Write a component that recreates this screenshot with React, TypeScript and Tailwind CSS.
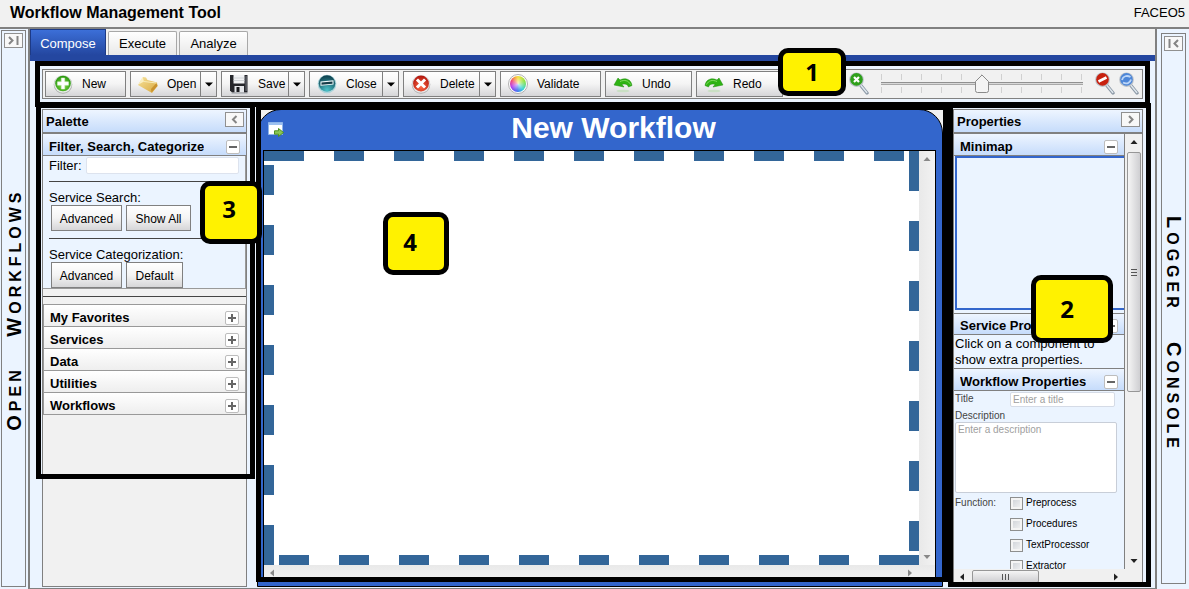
import React, { type ReactNode } from "react";

/* ---------- icons ---------- */

function NewIcon() {
  return (
    <svg width="20" height="20" viewBox="0 0 20 20" aria-hidden="true">
      <defs>
        <radialGradient id="newG" cx="50%" cy="60%" r="55%">
          <stop offset="0" stopColor="#8be04a" />
          <stop offset="1" stopColor="#2c9a12" />
        </radialGradient>
      </defs>
      <circle cx="10" cy="10.5" r="9.3" fill="#a9ada9" />
      <circle cx="10" cy="10" r="8.8" fill="#e6eae6" />
      <circle cx="10" cy="9.5" r="7.8" fill="url(#newG)" />
      <path d="M8.300 4h3.400v3.800h3.800v3.400h-3.800V15H8.300v-3.800H4.500V7.800h3.800z" fill="#fff" stroke="#d9efcf" strokeWidth=".5" />
    </svg>
  );
}

function FolderIcon() {
  return (
    <svg width="20" height="20" viewBox="0 0 20 20" aria-hidden="true">
      <defs>
        <linearGradient id="folG" x1="0" y1="0" x2="1" y2="1">
          <stop offset="0" stopColor="#f6e29c" />
          <stop offset="1" stopColor="#d9a83c" />
        </linearGradient>
      </defs>
      <path d="M0 11L5 3l3 .5L9.500 6 19 8.500l.5 3.500L14 19z" fill="url(#folG)" />
      <path d="M13.500 18.500l6-6.500-1-3-5.500 6z" fill="#c9922f" />
      <path d="M4.500 3L6 7.500.5 10.500z" fill="#faf0c4" />
      <path d="M6 7.500l12.500 1.500" stroke="#f8ebb8" strokeWidth="1" />
    </svg>
  );
}

function DiskIcon() {
  return (
    <svg width="20" height="20" viewBox="0 0 20 20" aria-hidden="true">
      <path d="M1 1h17.500v17.500H3L1 16.500z" fill="#26272c" />
      <path d="M4.500 1h11v8.500h-11z" fill="#f1f2f4" />
      <path d="M4.500 4h11M4.500 6.500h11" stroke="#c8cbd0" strokeWidth=".8" />
      <path d="M5.500 12h9.500v6.500H5.500z" fill="#e4e6ea" />
      <path d="M7.500 13h3v5h-3z" fill="#17181c" />
      <path d="M16.500 2h1.200v15h-1.200z" fill="#6c7078" />
      <path d="M2.500 19.300h16" stroke="#b0b3b8" strokeWidth="1" />
    </svg>
  );
}

function CloseIcon() {
  return (
    <svg width="20" height="20" viewBox="0 0 20 20" aria-hidden="true">
      <defs>
        <radialGradient id="cloG" cx="50%" cy="90%" r="85%">
          <stop offset="0" stopColor="#4cc3ca" />
          <stop offset="1" stopColor="#0f4350" />
        </radialGradient>
      </defs>
      <circle cx="10" cy="10" r="9.300" fill="#a9d3da" />
      <circle cx="10" cy="9.500" r="8.300" fill="url(#cloG)" />
      <path d="M3.500 7.500l13-1.200v4.200l-13 1.200z" fill="#f3fbfc" />
      <path d="M4.500 8.500l11-1v2.200l-11 1z" fill="#173d48" />
    </svg>
  );
}

function DeleteIcon() {
  return (
    <svg width="20" height="20" viewBox="0 0 20 20" aria-hidden="true">
      <defs>
        <radialGradient id="delG" cx="50%" cy="70%" r="65%">
          <stop offset="0" stopColor="#ff6b45" />
          <stop offset="1" stopColor="#b51a10" />
        </radialGradient>
      </defs>
      <circle cx="10" cy="10.500" r="9.300" fill="#adadaf" />
      <circle cx="10" cy="10" r="8.800" fill="#e9e6e6" />
      <circle cx="10" cy="9.500" r="7.900" fill="url(#delG)" />
      <path d="M7 6.500l6 6M13 6.500l-6 6" stroke="#fff" strokeWidth="3" strokeLinecap="square" />
    </svg>
  );
}

function ValidateIcon() {
  return (
    <span className="block size-5 rounded-full border border-[#b0b0b0] bg-white p-px" aria-hidden="true">
      <span className="block size-4 rounded-full bg-[radial-gradient(circle,#ffffffbb_0,#ffffff00_65%),conic-gradient(#f6e13a,#8ee23f_18%,#35d3d6_38%,#3f6cf0_52%,#b03ff0_68%,#f0447c_82%,#f6a03a_92%,#f6e13a)]" />
    </span>
  );
}

function TurnIcon({ flip = false }: { flip?: boolean }) {
  return (
    <svg width="20" height="20" viewBox="0 0 20 20" aria-hidden="true" className={flip ? "-scale-x-100" : ""}>
      <ellipse cx="10" cy="17" rx="6.500" ry="1.300" fill="#c9dfc4" />
      <path d="M1 11L5 4l2 2c5-2.500 11-1 12 5.500l-3.500 1.500c-1-3-4-3.500-6.500-2.500l2 2.500z" fill="#2fb314" stroke="#218a10" strokeWidth=".5" />
      <path d="M7 7.500c4.500-2 8.500-1 10.500 3" stroke="#84dc61" strokeWidth="1" fill="none" />
    </svg>
  );
}

function Lens({ kind }: { kind: "in" | "out" | "reset" }) {
  const rim = kind === "in" ? "#2fa01a" : kind === "out" ? "#c8210f" : "#4d86d8";
  return (
    <svg width="20" height="24" viewBox="0 0 20 24" aria-hidden="true">
      <path d="M11.500 13l6.500 8" stroke="#8b98a5" strokeWidth="3.400" strokeLinecap="round" />
      <path d="M11.800 13.200l6 7.300" stroke="#dfe7ee" strokeWidth="1.400" strokeLinecap="round" />
      <circle cx="7.500" cy="7.700" r="7.300" fill="#b9c0c8" />
      <circle cx="7.500" cy="7.400" r="6.300" fill={rim} />
      {kind === "in" && <path d="M5 5l5 5M10 5l-5 5" stroke="#fff" strokeWidth="2.200" />}
      {kind === "out" && <path d="M3.500 9.500l8-4" stroke="#fff" strokeWidth="2.600" />}
      {kind === "reset" && (
        <path d="M3 8c1-4 5-5 8.500-3M12 7.500c-.8 3.500-4.500 5-8 3" stroke="#bcd6f8" strokeWidth="1.800" fill="none" />
      )}
    </svg>
  );
}

function WindowIcon() {
  return (
    <svg width="17" height="16" viewBox="0 0 17 16" aria-hidden="true">
      <path d="M.5.500h14v12H.5z" fill="#fff" stroke="#8db4ea" />
      <path d="M1 1h13v2H1z" fill="#9cc0f0" />
      <path d="M6.500 8.800h4V6.500l5 4-5 4v-2.300h-4z" fill="#8bc653" stroke="#4d8f1f" />
    </svg>
  );
}

function Arrow({ d, color = "#222" }: { d: string; color?: string }) {
  return (
    <svg width="8" height="8" viewBox="0 0 8 8" aria-hidden="true">
      <path d={d} fill={color} />
    </svg>
  );
}
const UP = "M0.500 6L4 2l3.500 4z";
const DOWN = "M0.500 2L4 6l3.500-4z";
const LEFT = "M6 .5L2 4l4 3.500z";
const RIGHT = "M2 .5L6 4 2 7.500z";

/* ---------- small parts ---------- */

function SquareButton({ label, path }: { label: string; path: string }) {
  return (
    <button
      type="button"
      aria-label={label}
      className="flex h-[15px] w-[19px] shrink-0 items-center justify-center border border-[#909090] bg-[#f8f8f8]"
    >
      <svg width="13" height="11" viewBox="0 0 13 11" fill="none" stroke="#858585" strokeWidth="2" aria-hidden="true">
        <path d={path} />
      </svg>
    </button>
  );
}

function Fold({ open, label }: { open: boolean; label: string }) {
  return (
    <button
      type="button"
      aria-label={label}
      className="flex size-[14px] shrink-0 items-center justify-center rounded-xs border border-[#bdbdbd] bg-white"
    >
      <svg width="8" height="8" viewBox="0 0 8 8" stroke="#666" strokeWidth="2" aria-hidden="true">
        <path d={open ? "M0 4h8" : "M0 4h8M4 0v8"} />
      </svg>
    </button>
  );
}

function Frame({ className }: { className: string }) {
  return <div aria-hidden="true" className={`pointer-events-none absolute z-10 border-5 border-black ${className}`} />;
}

function Marker({ n, className }: { n: number; className: string }) {
  return (
    <div
      className={`pointer-events-none absolute z-20 flex items-center justify-center rounded-[10px] border-5 border-black bg-[#fff200] font-['Noto_Sans',sans-serif] text-2xl leading-none font-bold ${className}`}
    >
      {n}
    </div>
  );
}

const face = "bg-linear-to-b from-white via-[#f4f4f4] to-[#d6d6d8] border border-[#808080]";

function ToolButton({ icon, label, width, menu = false }: { icon: ReactNode; label: string; width: string; menu?: boolean }) {
  return (
    <div className={`flex h-[26px] shrink-0 ${face} ${width}`}>
      <button type="button" className="flex flex-1 items-center gap-[9px] pl-[7px] text-xs">
        {icon}
        {label}
      </button>
      {menu && (
        <button type="button" aria-label={`${label} options`} className="flex w-4 items-center justify-center border-l border-[#808080]">
          <svg width="8" height="5" viewBox="0 0 8 5" aria-hidden="true">
            <path d="M0 .5h8L4 4.500z" fill="#000" />
          </svg>
        </button>
      )}
    </div>
  );
}

function SideWord({ text }: { text: string }) {
  return (
    <span>
      <span className="text-xl leading-none">{text[0]}</span>
      {text.slice(1)}
    </span>
  );
}

function PanelHeader({ title, children }: { title: string; children: ReactNode }) {
  return (
    <div className="flex h-6 shrink-0 items-start justify-between border-b-2 border-[#808080] bg-linear-to-b from-[#eef5ff] to-[#c6dcfb] pt-[2px] pr-[2px] pl-[3px]">
      <h2 className="text-[13px] leading-5 font-bold">{title}</h2>
      {children}
    </div>
  );
}

function SectionHeader({ title, className = "" }: { title: string; className?: string }) {
  return (
    <div className={`flex h-[22px] shrink-0 items-center justify-between border-b border-[#808080] bg-linear-to-b from-[#eef5ff] to-[#c6dcfb] pt-1 pr-[6px] pl-[6px] ${className}`}>
      <h3 className="truncate text-[13px] font-bold">{title}</h3>
      <Fold open label={`Collapse ${title}`} />
    </div>
  );
}

function SmallButton({ children, width }: { children: ReactNode; width: string }) {
  return (
    <button type="button" className={`h-[26px] pt-px text-xs ${face} ${width}`}>
      {children}
    </button>
  );
}

/* ---------- regions ---------- */

function Toolbar() {
  const ticks = Array.from({ length: 11 }, (_, i) => 1 + i * 20);
  return (
    <div className="relative flex h-[30px] shrink-0 items-center gap-1 border border-[#808080] bg-[#f1f1f1] pr-[3px] pl-[2px]">
      <ToolButton icon={<NewIcon />} label="New" width="w-[81px]" />
      <ToolButton icon={<FolderIcon />} label="Open" width="w-[87px]" menu />
      <ToolButton icon={<DiskIcon />} label="Save" width="w-[84px]" menu />
      <ToolButton icon={<CloseIcon />} label="Close" width="w-[90px]" menu />
      <ToolButton icon={<DeleteIcon />} label="Delete" width="w-[93px]" menu />
      <ToolButton icon={<ValidateIcon />} label="Validate" width="w-[101px]" />
      <ToolButton icon={<TurnIcon />} label="Undo" width="w-[87px]" />
      <ToolButton icon={<TurnIcon flip />} label="Redo" width="w-[87px]" />
      <div className="ml-auto flex items-center">
        <button type="button" aria-label="Zoom in">
          <Lens kind="in" />
        </button>
        <div className="relative mr-3 ml-3 h-5 w-[202px]">
          <svg width="202" height="20" viewBox="0 0 202 20" aria-hidden="true">
            {ticks.map((x) => (
              <path key={x} d={`M${x - 0.5} 0v6M${x - 0.5} 13v6`} stroke="#d0d0d0" />
            ))}
            <path d="M0 8.500h202" stroke="#909090" />
            <path d="M0 9.500h202" stroke="#d8d8d8" />
            <path d="M0 10.500h202" stroke="#a8a8a8" />
            <path d="M94.500 7.500L101 1l6.500 6.500v9q0 2-2 2h-9q-2 0-2-2z" fill="#f4f4f4" stroke="#8a8a8a" />
          </svg>
          <input type="range" aria-label="Zoom level" min={0} max={10} defaultValue={5} className="absolute inset-0 w-full opacity-0" />
        </div>
        <button type="button" aria-label="Zoom out">
          <Lens kind="out" />
        </button>
        <button type="button" aria-label="Reset zoom" className="ml-1">
          <Lens kind="reset" />
        </button>
      </div>
      <Frame className="-inset-x-2 -inset-y-[9px]" />
      <Marker n={1} className="-top-[22px] left-[735px] h-12 w-[68px]" />
    </div>
  );
}

function Palette() {
  return (
    <section className="relative flex w-[205px] shrink-0 flex-col border border-[#808080] bg-[#f1f1f1]">
      <PanelHeader title="Palette">
        <SquareButton label="Collapse palette" path="M8.500 2L5 5.500 8.500 9" />
      </PanelHeader>
      <SectionHeader title="Filter, Search, Categorize" />
      <div className="border-r border-b border-[#999] bg-[#ebf4ff] pl-[6px] text-[13px]">
        <div className="flex h-[19px] items-center">
          <label htmlFor="filter">Filter:</label>
          <input id="filter" className="mr-[6px] ml-1 h-[17px] min-w-0 flex-1 rounded-xs border border-[#dde3ee] bg-white px-1 outline-none" />
        </div>
        <hr className="mt-[6px] border-[#444]" />
        <p className="pt-2 leading-[15px]">Service Search:</p>
        <div className="flex gap-1 pl-[2px]">
          <SmallButton width="w-[71px]">Advanced</SmallButton>
          <SmallButton width="w-[65px]">Show All</SmallButton>
        </div>
        <hr className="mt-[7px] border-[#444]" />
        <p className="pt-2 leading-[15px]">Service Categorization:</p>
        <div className="flex gap-1 pl-[2px]">
          <SmallButton width="w-[71px]">Advanced</SmallButton>
          <SmallButton width="w-[57px]">Default</SmallButton>
        </div>
      </div>
      <hr className="my-[7px] border-[#444]" />
      <ul className="border-x border-t border-[#999]">
        {["My Favorites", "Services", "Data", "Utilities", "Workflows"].map((name) => (
          <li key={name} className="flex h-[22px] items-center justify-between border-b border-[#999] bg-linear-to-b from-white to-[#eeeeee] pt-1 pr-[6px] pl-[6px]">
            <span className="text-[13px] font-bold">{name}</span>
            <Fold open={false} label={`Expand ${name}`} />
          </li>
        ))}
      </ul>
      <Frame className="-top-[7px] -right-[9px] -left-[7px] h-[376px]" />
      <Marker n={3} className="top-[71px] -right-4 h-[63px] w-[62px] pr-1 pb-2" />
    </section>
  );
}

function Canvas() {
  return (
    <section className="relative flex min-w-0 flex-1 flex-col bg-[#f1f1f1]">
      <div className="flex min-h-0 flex-1 flex-col rounded-t-[24px] border border-black bg-[#3366cc]">
        <div className="flex h-10 shrink-0 items-center pl-[10px]">
          <WindowIcon />
          <h1 className="flex-1 pb-1 text-center text-3xl leading-9 font-bold text-white">New Workflow</h1>
        </div>
        <div className="mr-[6px] mb-[5px] ml-[5px] flex min-h-0 flex-1 flex-col border border-black bg-white">
          <div className="flex min-h-0 flex-1">
            <div className="grid min-w-0 flex-1 grid-cols-[10px_minmax(0,1fr)_10px] grid-rows-[10px_minmax(0,1fr)_10px]">
              <div className="bg-[#336699]" />
              <div className="bg-[repeating-linear-gradient(to_right,#336699_0_30px,#ffffff_30px_60px)]" />
              <div className="bg-[#336699]" />
              <div className="bg-[repeating-linear-gradient(to_top,#336699_0_30px,#ffffff_30px_60px)]" />
              <div />
              <div className="bg-[repeating-linear-gradient(to_bottom,#336699_0_30px,#ffffff_30px_60px)]" />
              <div className="bg-[#336699]" />
              <div className="bg-[repeating-linear-gradient(to_left,#336699_0_30px,#ffffff_30px_60px)]" />
              <div className="bg-[#336699]" />
            </div>
            <div className="flex w-4 flex-col items-center justify-between bg-linear-to-r from-[#e9e9e9] to-[#f2f2f2] py-1">
              <Arrow d={UP} color="#888" />
              <Arrow d={DOWN} color="#888" />
            </div>
          </div>
          <div className="flex h-[15px] items-center justify-between bg-linear-to-b from-[#e9e9e9] to-[#f2f2f2] pr-[21px] pl-1">
            <Arrow d={LEFT} color="#888" />
            <Arrow d={RIGHT} color="#888" />
          </div>
        </div>
      </div>
      <Frame className="-top-1 -right-[5px] bottom-[5px] -left-px" />
      <Marker n={4} className="top-[103px] left-[126px] h-[63px] w-[66px] pr-3 pb-1" />
    </section>
  );
}

function Properties() {
  return (
    <section className="relative flex w-[190px] shrink-0 flex-col border border-[#808080] bg-[#ebf4ff]">
      <PanelHeader title="Properties">
        <SquareButton label="Collapse properties" path="M5 2l3.500 3.500L5 9" />
      </PanelHeader>
      <div className="flex min-h-0 flex-1">
        <div className="flex min-w-0 flex-1 flex-col overflow-hidden border-r border-[#808080]">
          <SectionHeader title="Minimap" />
          <div className="ml-px h-[154px] shrink-0 border-2 border-r-0 border-[#3366cc]" />
          <SectionHeader title="Service Properties" className="mt-[3px] border-t" />
          <p className="h-[34px] shrink-0 border-b border-[#808080] pt-px pl-px text-[13px] leading-4">
            Click on a component to show extra properties.
          </p>
          <SectionHeader title="Workflow Properties" />
          <form className="shrink-0 pl-px text-[10px] leading-3 text-[#444]">
            <div className="flex h-4 items-center">
              <label htmlFor="title" className="w-[55px]">Title</label>
              <input id="title" placeholder="Enter a title" className="h-[15px] w-[105px] rounded-xs border border-[#d5dbe6] bg-white px-[2px] placeholder-[#a0a0a0] outline-none" />
            </div>
            <label htmlFor="description" className="block h-[15px] pt-[3px]">Description</label>
            <textarea id="description" placeholder="Enter a description" className="block h-[71px] w-[162px] resize-none rounded-xs border border-[#c8ced8] bg-white px-[2px] py-px placeholder-[#a0a0a0] outline-none" />
            <fieldset className="mt-1 flex">
              <legend className="float-left w-[55px]">Function:</legend>
              <div className="flex flex-col">
                {["Preprocess", "Procedures", "TextProcessor", "Extractor"].map((name) => (
                  <label key={name} className="flex h-[21px] items-start gap-[3px] text-black">
                    <input type="checkbox" className="size-[13px] appearance-none border border-[#8e8f8f] bg-linear-to-br from-[#cbcfd5] to-[#f6f6f6] shadow-[inset_0_0_0_2px_#f4f4f4]" />
                    {name}
                  </label>
                ))}
              </div>
            </fieldset>
          </form>
        </div>
        <div className="flex w-[17px] flex-col items-center bg-[#f0f0f0] py-1">
          <Arrow d={UP} />
          <div className="mt-[6px] flex h-[240px] w-[14px] flex-col items-center justify-center gap-[2px] rounded-xs border border-[#979797] bg-linear-to-r from-[#f5f5f5] to-[#cfcfd2]">
            <span className="h-px w-[6px] bg-[#555]" />
            <span className="h-px w-[6px] bg-[#555]" />
            <span className="h-px w-[6px] bg-[#555]" />
          </div>
          <div className="mt-auto flex">
            <Arrow d={DOWN} />
          </div>
        </div>
      </div>
      <div className="flex h-[17px] shrink-0 items-start bg-[#f0f0f0] pr-[22px] pl-1">
        <div className="flex h-[15px] items-center">
          <Arrow d={LEFT} />
        </div>
        <div className="mt-px ml-[6px] flex h-[13px] w-[67px] items-center justify-center gap-[2px] rounded-xs border border-[#979797] bg-linear-to-b from-[#f5f5f5] to-[#cfcfd2]">
          <span className="h-[6px] w-px bg-[#555]" />
          <span className="h-[6px] w-px bg-[#555]" />
          <span className="h-[6px] w-px bg-[#555]" />
        </div>
        <div className="ml-auto flex h-[15px] items-center">
          <Arrow d={RIGHT} />
        </div>
      </div>
      <Frame className="-top-[7px] -right-[9px] -bottom-px -left-[6px]" />
      <Marker n={2} className="top-[165px] right-[29px] h-[68px] w-[82px] pr-[10px]" />
    </section>
  );
}

const sideText =
  "flex gap-[30px] text-base leading-none font-bold uppercase tracking-[4px] [writing-mode:vertical-rl] [text-orientation:sideways]";

export default function App() {
  return (
    <div className="flex h-screen flex-col overflow-hidden bg-[#f1f1f1] font-['Liberation_Sans',Arial,sans-serif] text-[13px] text-black">
      <header className="flex h-[29px] shrink-0 items-center justify-between border-b-2 border-[#808080] pr-1 pb-[2px] pl-[10px]">
        <span className="text-base font-bold">Workflow Management Tool</span>
        <span>FACEO5</span>
      </header>
      <div className="flex min-h-0 flex-1">
        <aside className="flex w-[30px] shrink-0 border-r-2 border-[#808080] bg-[#ebf4ff] pt-px pb-[2px] pl-px">
          <div className="flex w-[25px] flex-col items-center border border-[#808080] pt-[2px]">
            <SquareButton label="Expand open workflows" path="M2 2l3.500 3.500L2 9M10.500 1v9" />
            <div className="flex flex-1 items-center pb-4">
              <div className={`rotate-180 ${sideText}`}>
                <SideWord text="Open" />
                <SideWord text="Workflows" />
              </div>
            </div>
          </div>
        </aside>
        <main className="flex min-w-0 flex-1 flex-col">
          <nav className="flex shrink-0 items-end gap-[2px] border-b-[6px] border-[#2447a0]">
            <button type="button" className="h-[26px] w-[76px] border border-b-0 border-[#1d3a86] bg-linear-to-b from-[#3c6fd8] to-[#2447a0] pt-[2px] text-white">
              Compose
            </button>
            <button type="button" className="h-6 w-[69px] rounded-t-xs border border-b-0 border-[#a8a8a8] bg-linear-to-b from-white to-[#e9e9e9]">
              Execute
            </button>
            <button type="button" className="h-6 w-[69px] rounded-t-xs border border-b-0 border-[#a8a8a8] bg-linear-to-b from-white to-[#e9e9e9]">
              Analyze
            </button>
          </nav>
          <div className="flex min-h-0 flex-1 flex-col gap-[10px] border-b border-[#808080] bg-[#ebf4ff] px-3 pt-2 pb-px">
            <Toolbar />
            <div className="flex min-h-0 flex-1 gap-[10px]">
              <Palette />
              <Canvas />
              <Properties />
            </div>
          </div>
        </main>
        <aside className="flex w-[34px] shrink-0 border-l-2 border-[#808080] bg-[#ebf4ff] pt-1 pr-[3px] pb-[5px] pl-1">
          <div className="flex w-[25px] flex-col items-center border border-[#808080] pt-[2px]">
            <SquareButton label="Expand logger console" path="M2.500 1v9M11 2L7.500 5.500 11 9" />
            <div className={`mt-[165px] ${sideText}`}>
              <SideWord text="Logger" />
              <SideWord text="Console" />
            </div>
          </div>
        </aside>
      </div>
    </div>
  );
}
